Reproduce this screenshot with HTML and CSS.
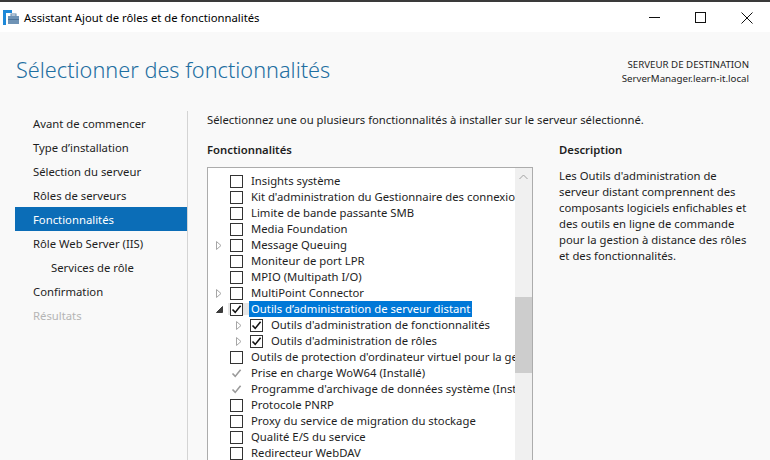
FILE: index.html
```html
<!DOCTYPE html>
<html lang="fr">
<head>
<meta charset="utf-8">
<title>Assistant Ajout de rôles et de fonctionnalités</title>
<link rel="stylesheet" href="styles.css">
</head>
<body>
<div class="taskstrip"></div>
<header class="titlebar">
  <svg class="appicon" width="16" height="16" viewBox="0 0 16 16">
    <rect x="0" y="0" width="3" height="15" fill="#1e88d8"/>
    <rect x="0" y="0" width="9" height="3" fill="#1e88d8"/>
    <rect x="8" y="4" width="5" height="2" fill="none" stroke="#5f86ab" stroke-width="1"/>
    <rect x="5" y="6" width="11" height="8" fill="#6f93b5"/>
    <rect x="5" y="9" width="11" height="1" fill="#4d7398"/>
  </svg>
  <span class="wintitle">Assistant Ajout de rôles et de fonctionnalités</span>
  <div class="controls">
    <svg class="ctl" width="46" height="30" viewBox="0 0 46 30"><line x1="17" y1="15.5" x2="28" y2="15.5" stroke="#111" stroke-width="1"/></svg>
    <svg class="ctl" width="46" height="30" viewBox="0 0 46 30"><rect x="17.5" y="10.5" width="10" height="10" fill="none" stroke="#111" stroke-width="1"/></svg>
    <svg class="ctl" width="46" height="30" viewBox="0 0 46 30"><path d="M17.5 10.5 L28.5 21.5 M28.5 10.5 L17.5 21.5" stroke="#111" stroke-width="1"/></svg>
  </div>
</header>

<div class="pagehead">
  <h1 class="pagetitle">Sélectionner des fonctionnalités</h1>
  <div class="dest">
    <div>SERVEUR DE DESTINATION</div>
    <div>ServerManager.learn-it.local</div>
  </div>
</div>

<div class="main">
  <nav class="steps">
    <div class="step">Avant de commencer</div>
    <div class="step">Type d’installation</div>
    <div class="step">Sélection du serveur</div>
    <div class="step">Rôles de serveurs</div>
    <div class="step active">Fonctionnalités</div>
    <div class="step">Rôle Web Server (IIS)</div>
    <div class="step sub">Services de rôle</div>
    <div class="step">Confirmation</div>
    <div class="step disabled">Résultats</div>
  </nav>

  <section class="content">
    <p class="intro">Sélectionnez une ou plusieurs fonctionnalités à installer sur le serveur sélectionné.</p>
    <div class="cols">
      <div class="features">
        <h2 class="colhead">Fonctionnalités</h2>
        <div class="tree">
          <div class="rows">
            <div class="row"><span class="exp"></span><span class="cb"></span><span class="lbl">Insights système</span></div>
            <div class="row"><span class="exp"></span><span class="cb"></span><span class="lbl">Kit d'administration du Gestionnaire des connexions Bureau à distance</span></div>
            <div class="row"><span class="exp"></span><span class="cb"></span><span class="lbl">Limite de bande passante SMB</span></div>
            <div class="row"><span class="exp"></span><span class="cb"></span><span class="lbl">Media Foundation</span></div>
            <div class="row"><span class="exp"><svg width="6" height="9" viewBox="0 0 6 9"><path d="M0.5 0.5 L5 4.5 L0.5 8.5 Z" fill="none" stroke="#a6a6a6"/></svg></span><span class="cb"></span><span class="lbl">Message Queuing</span></div>
            <div class="row"><span class="exp"></span><span class="cb"></span><span class="lbl">Moniteur de port LPR</span></div>
            <div class="row"><span class="exp"></span><span class="cb"></span><span class="lbl">MPIO (Multipath I/O)</span></div>
            <div class="row"><span class="exp"><svg width="6" height="9" viewBox="0 0 6 9"><path d="M0.5 0.5 L5 4.5 L0.5 8.5 Z" fill="none" stroke="#a6a6a6"/></svg></span><span class="cb"></span><span class="lbl">MultiPoint Connector</span></div>
            <div class="row current"><span class="exp"><svg width="7" height="7" viewBox="0 0 7 7"><path d="M6.5 0.5 L6.5 6.5 L0.5 6.5 Z" fill="#3c3c3c" stroke="#3c3c3c" stroke-width="1"/></svg></span><span class="cbwrap"><span class="cb"><svg width="11" height="11" viewBox="0 0 11 11"><path d="M1.5 5.5 L4.2 8.4 L9.6 1.8" fill="none" stroke="#111" stroke-width="1.6"/></svg></span></span><span class="lbl sel">Outils d’administration de serveur distant</span></div>
            <div class="row lvl1"><span class="exp"><svg width="6" height="9" viewBox="0 0 6 9"><path d="M0.5 0.5 L5 4.5 L0.5 8.5 Z" fill="none" stroke="#a6a6a6"/></svg></span><span class="cb"><svg width="11" height="11" viewBox="0 0 11 11"><path d="M1.5 5.5 L4.2 8.4 L9.6 1.8" fill="none" stroke="#111" stroke-width="1.6"/></svg></span><span class="lbl">Outils d'administration de fonctionnalités</span></div>
            <div class="row lvl1"><span class="exp"><svg width="6" height="9" viewBox="0 0 6 9"><path d="M0.5 0.5 L5 4.5 L0.5 8.5 Z" fill="none" stroke="#a6a6a6"/></svg></span><span class="cb"><svg width="11" height="11" viewBox="0 0 11 11"><path d="M1.5 5.5 L4.2 8.4 L9.6 1.8" fill="none" stroke="#111" stroke-width="1.6"/></svg></span><span class="lbl">Outils d'administration de rôles</span></div>
            <div class="row"><span class="exp"></span><span class="cb"></span><span class="lbl">Outils de protection d'ordinateur virtuel pour la gestion des machines virtuelles</span></div>
            <div class="row"><span class="exp"></span><span class="cb off"><svg width="11" height="11" viewBox="0 0 11 11"><path d="M1.5 5.5 L4.2 8.4 L9.6 1.8" fill="none" stroke="#9a9a9a" stroke-width="1.6"/></svg></span><span class="lbl">Prise en charge WoW64 (Installé)</span></div>
            <div class="row"><span class="exp"></span><span class="cb off"><svg width="11" height="11" viewBox="0 0 11 11"><path d="M1.5 5.5 L4.2 8.4 L9.6 1.8" fill="none" stroke="#9a9a9a" stroke-width="1.6"/></svg></span><span class="lbl">Programme d'archivage de données système (Installé)</span></div>
            <div class="row"><span class="exp"></span><span class="cb"></span><span class="lbl">Protocole PNRP</span></div>
            <div class="row"><span class="exp"></span><span class="cb"></span><span class="lbl">Proxy du service de migration du stockage</span></div>
            <div class="row"><span class="exp"></span><span class="cb"></span><span class="lbl">Qualité E/S du service</span></div>
            <div class="row"><span class="exp"></span><span class="cb"></span><span class="lbl">Redirecteur WebDAV</span></div>
          </div>
          <div class="scrollbar">
            <svg class="sarrow" width="9" height="6" viewBox="0 0 9 6"><path d="M0.5 5 L4.5 1 L8.5 5" fill="none" stroke="#a0a0a0" stroke-width="1"/></svg>
            <div class="thumb"></div>
          </div>
        </div>
      </div>
      <div class="desc">
        <h2 class="colhead">Description</h2>
        <p class="desctext">Les Outils d'administration de<br>serveur distant comprennent des<br>composants logiciels enfichables et<br>des outils en ligne de commande<br>pour la gestion à distance des rôles<br>et des fonctionnalités.</p>
      </div>
    </div>
  </section>
</div>
</body>
</html>
```

FILE: styles.css
```css
* { box-sizing: border-box; }
html, body { margin: 0; padding: 0; }
body {
  width: 770px;
  height: 460px;
  overflow: hidden;
  background: #f9f9f9;
  font-family: "Noto Sans", "Open Sans", sans-serif;
  font-size: 11.3px;
  color: #1e1e1e;
}
.taskstrip { height: 2px; background: #3a3a3a; }
.titlebar {
  height: 30px;
  background: #ffffff;
  display: flex;
  align-items: center;
}
.appicon { margin-left: 3px; margin-top: 2px; }
.wintitle { margin-left: 5px; font-size: 11.3px; color: #000; }
.controls { margin-left: auto; display: flex; }
.ctl { display: block; }

.pagehead {
  height: 79px;
  display: flex;
  justify-content: space-between;
  padding: 0 21px 0 16px;
}
.pagetitle {
  margin: 23px 0 0 0;
  font-size: 21.7px;
  font-weight: 300;
  color: #1f6fa1;
  line-height: 30px;
}
.dest {
  margin-top: 26px;
  text-align: right;
  font-size: 9.7px;
  line-height: 14px;
  color: #1e1e1e;
}

.main { display: flex; height: 349px; }
.steps {
  width: 188px;
  padding-left: 15px;
  border-right: 1px solid #d4d4d4;
}
.step {
  height: 24px;
  line-height: 25px;
  padding-left: 18px;
  color: #1e1e1e;
}
.step.sub { padding-left: 36px; }
.step.active { background: #0b6db7; color: #fff; }
.step.disabled { color: #b5b5b5; }

.content { padding: 1px 0 0 19px; flex: 1; }
.intro { margin: 0; line-height: 16px; }
.cols { display: flex; gap: 26px; margin-top: 14px; }
.colhead {
  margin: 0;
  font-size: 11.3px;
  font-weight: 600;
  line-height: 16px;
}
.features { width: 326px; }
.tree {
  margin-top: 9px;
  height: 300px;
  border: 1px solid #acacac;
  background: #ffffff;
  display: flex;
}
.rows { flex: 1; overflow: hidden; padding-top: 5px; }
.row {
  height: 16px;
  display: flex;
  align-items: center;
  white-space: nowrap;
}
.row.lvl1 { padding-left: 20px; }
.exp {
  width: 22px;
  height: 16px;
  flex: none;
  display: flex;
  align-items: center;
  justify-content: center;
}
.cb {
  width: 13px;
  height: 13px;
  flex: none;
  border: 1px solid #333333;
  background: #fff;
  display: flex;
  align-items: center;
  justify-content: center;
}
.cb.off { border-color: transparent; background: transparent; }
.cbwrap {
  width: 22px;
  margin-left: -2px;
  height: 12px;
  background: #e6e6e6;
  display: flex;
  align-items: center;
  padding-left: 2px;
  flex: none;
}
.lbl { margin-left: 6px; padding: 0 2px; line-height: 16px; }
.row.current .lbl { margin-left: -1px; }
.lbl.sel { background: #0078d7; color: #fff; }

.scrollbar {
  width: 17px;
  flex: none;
  background: #f0f0f0;
  position: relative;
}
.sarrow { display: block; margin: 6px auto 0 auto; }
.thumb {
  position: absolute;
  left: 0;
  right: 0;
  top: 129px;
  height: 76px;
  background: #cdcdcd;
}

.desc { width: 205px; }
.desctext { margin: 10px 0 0 0; line-height: 16px; }
```
